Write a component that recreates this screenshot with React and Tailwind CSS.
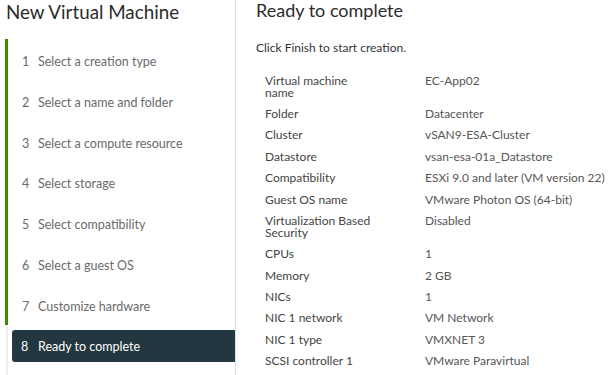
import React from "react";

const steps = [
  "Select a creation type",
  "Select a name and folder",
  "Select a compute resource",
  "Select storage",
  "Select compatibility",
  "Select a guest OS",
  "Customize hardware",
];

const rows = [
  ["Virtual machine name", "EC-App02"],
  ["Folder", "Datacenter"],
  ["Cluster", "vSAN9-ESA-Cluster"],
  ["Datastore", "vsan-esa-01a_Datastore"],
  ["Compatibility", "ESXi 9.0 and later (VM version 22)"],
  ["Guest OS name", "VMware Photon OS (64-bit)"],
  ["Virtualization Based Security", "Disabled"],
  ["CPUs", "1"],
  ["Memory", "2 GB"],
  ["NICs", "1"],
  ["NIC 1 network", "VM Network"],
  ["NIC 1 type", "VMXNET 3"],
  ["SCSI controller 1", "VMware Paravirtual"],
];

export default function App() {
  return (
    <div
      className="flex w-[612px] h-[375px] overflow-hidden bg-white"
      style={{ fontFamily: "Lato, 'Liberation Sans', sans-serif" }}
    >
      <div className="w-[236px] shrink-0 border-r border-[#dcdcdc] flex flex-col">
        <div className="pl-[6px] pt-0 h-[42px] text-[18.8px] leading-[23px] text-[#2b2b2b]">
          New Virtual Machine
        </div>
        <div className="flex flex-col">
          {steps.map((s, i) => (
            <div
              key={i}
              className="ml-[5px] h-[40.8px] border-l-[3px] border-[#3f8a00] flex items-center pt-[5px] text-[12.5px] text-[#6a6a6a]"
            >
              <span className="ml-[14px] w-[16px]">{i + 1}</span>
              <span>{s}</span>
            </div>
          ))}
          <div className="ml-[6px] h-[50px] border-l-[2px] border-[#eef0f0] pt-[5px]">
            <div className="ml-[4px] h-[32px] rounded-l-[3px] bg-[#233740] flex items-center pt-[2px] text-[12.5px] text-white">
              <span className="ml-[9px] w-[17px]">8</span>
              <span>Ready to complete</span>
            </div>
          </div>
        </div>
      </div>
      <div className="flex-1 pl-[20px]">
        <div className="text-[18px] leading-[20px] text-[#2b2b2b] pt-0 h-[38px]">
          Ready to complete
        </div>
        <div className="text-[12px] leading-[20px] text-[#333]">
          Click Finish to start creation.
        </div>
        <div className="mt-[12px] pl-[9px] flex flex-col text-[12px] leading-[12px]">
          {rows.map(([k, v], i) => (
            <div key={i} className="flex py-[4.7px]">
              <div className="w-[160px] shrink-0 pr-[50px] text-[#444]">{k}</div>
              <div className="text-[#565656]">{v}</div>
            </div>
          ))}
        </div>
      </div>
    </div>
  );
}
